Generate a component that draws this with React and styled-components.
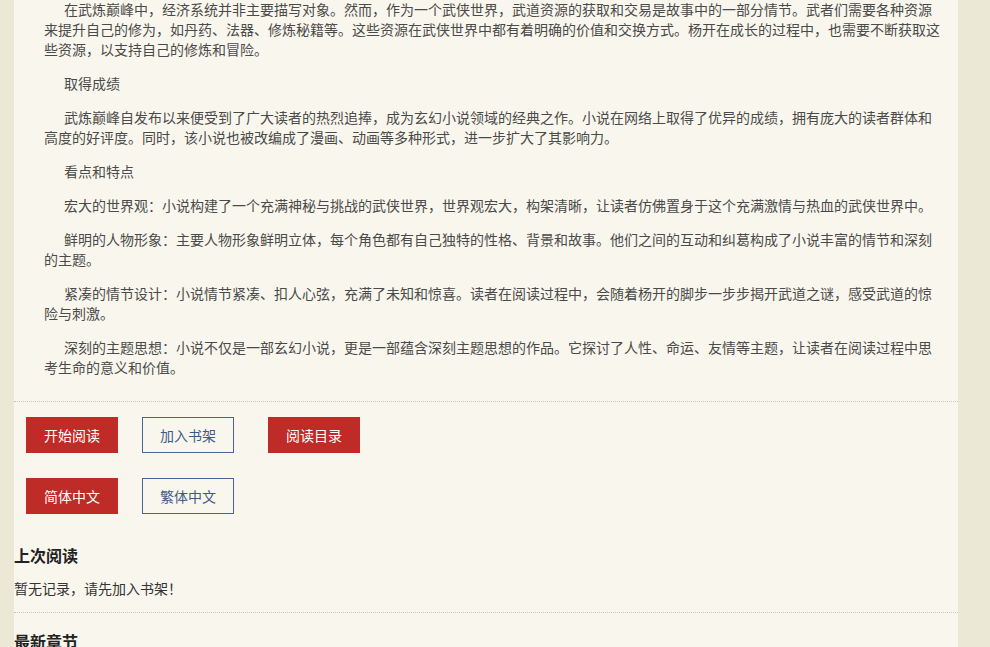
import React from "react";
import styled, { createGlobalStyle } from "styled-components";

const GlobalStyle = createGlobalStyle`
  html, body {
    margin: 0;
    padding: 0;
    background: #ebe8d6;
  }
  body {
    font-family: "Liberation Sans", "Noto Sans CJK SC", sans-serif;
    font-size: 14px;
    color: #444;
  }
`;

const paragraphs = [
  "在武炼巅峰中，经济系统并非主要描写对象。然而，作为一个武侠世界，武道资源的获取和交易是故事中的一部分情节。武者们需要各种资源来提升自己的修为，如丹药、法器、修炼秘籍等。这些资源在武侠世界中都有着明确的价值和交换方式。杨开在成长的过程中，也需要不断获取这些资源，以支持自己的修炼和冒险。",
  "取得成绩",
  "武炼巅峰自发布以来便受到了广大读者的热烈追捧，成为玄幻小说领域的经典之作。小说在网络上取得了优异的成绩，拥有庞大的读者群体和高度的好评度。同时，该小说也被改编成了漫画、动画等多种形式，进一步扩大了其影响力。",
  "看点和特点",
  "宏大的世界观：小说构建了一个充满神秘与挑战的武侠世界，世界观宏大，构架清晰，让读者仿佛置身于这个充满激情与热血的武侠世界中。",
  "鲜明的人物形象：主要人物形象鲜明立体，每个角色都有自己独特的性格、背景和故事。他们之间的互动和纠葛构成了小说丰富的情节和深刻的主题。",
  "紧凑的情节设计：小说情节紧凑、扣人心弦，充满了未知和惊喜。读者在阅读过程中，会随着杨开的脚步一步步揭开武道之谜，感受武道的惊险与刺激。",
  "深刻的主题思想：小说不仅是一部玄幻小说，更是一部蕴含深刻主题思想的作品。它探讨了人性、命运、友情等主题，让读者在阅读过程中思考生命的意义和价值。",
];

const App = () => {
  return (
    <>
      <GlobalStyle />
      <Panel>
        <Intro>
          {paragraphs.map((text, index) => (
            <Para key={`para_${index}`}>{text}</Para>
          ))}
        </Intro>

        <Actions>
          <ButtonRow>
            <ActionButton $filled>开始阅读</ActionButton>
            <ActionButton>加入书架</ActionButton>
            <ActionButton $filled $wide>
              阅读目录
            </ActionButton>
          </ButtonRow>
          <ButtonRow>
            <ActionButton $filled>简体中文</ActionButton>
            <ActionButton>繁体中文</ActionButton>
          </ButtonRow>
        </Actions>

        <Section>
          <SectionTitle>上次阅读</SectionTitle>
          <SectionText>暂无记录，请先加入书架！</SectionText>
        </Section>

        <Section>
          <SectionTitle>最新章节</SectionTitle>
        </Section>
      </Panel>
    </>
  );
};

export default App;

const Panel = styled.div`
  margin-left: 14px;
  width: 944px;
  min-height: 647px;
  background: #f9f7ed;
`;

const Intro = styled.div`
  padding: 0 14px 9px 30px;
  border-bottom: 1px dotted #c8c6bd;
`;

const Para = styled.p`
  margin: 0 0 14px;
  line-height: 20px;
  text-indent: 20px;
  color: #4a4a4a;
`;

const Actions = styled.div`
  padding: 15px 12px 0;
  display: flex;
  flex-direction: column;
  gap: 25px;
`;

const ButtonRow = styled.div`
  display: flex;
  align-items: center;
`;

const ActionButton = styled.button`
  width: 92px;
  height: 36px;
  box-sizing: border-box;
  margin-right: ${(p) => (p.$wide ? "0" : "24px")};
  margin-left: ${(p) => (p.$wide ? "10px" : "0")};
  padding: 0;
  font-family: "Liberation Sans", "Noto Sans CJK SC", sans-serif;
  font-size: 14px;
  cursor: pointer;
  border: 1px solid ${(p) => (p.$filled ? "#bf2b26" : "#4a6591")};
  background: ${(p) => (p.$filled ? "#bf2b26" : "transparent")};
  color: ${(p) => (p.$filled ? "#fff" : "#3f5a88")};
`;

const Section = styled.div`
  padding-top: 31px;
  padding-bottom: 13px;
  border-bottom: 1px dotted #c8c6bd;

  &:last-child {
    padding-top: 18px;
    border-bottom: none;
  }
`;

const SectionTitle = styled.h3`
  margin: 0;
  font-size: 16px;
  font-weight: bold;
  line-height: 24px;
  color: #222;
`;

const SectionText = styled.p`
  margin: 10px 0 0;
  line-height: 20px;
  color: #333;
`;
